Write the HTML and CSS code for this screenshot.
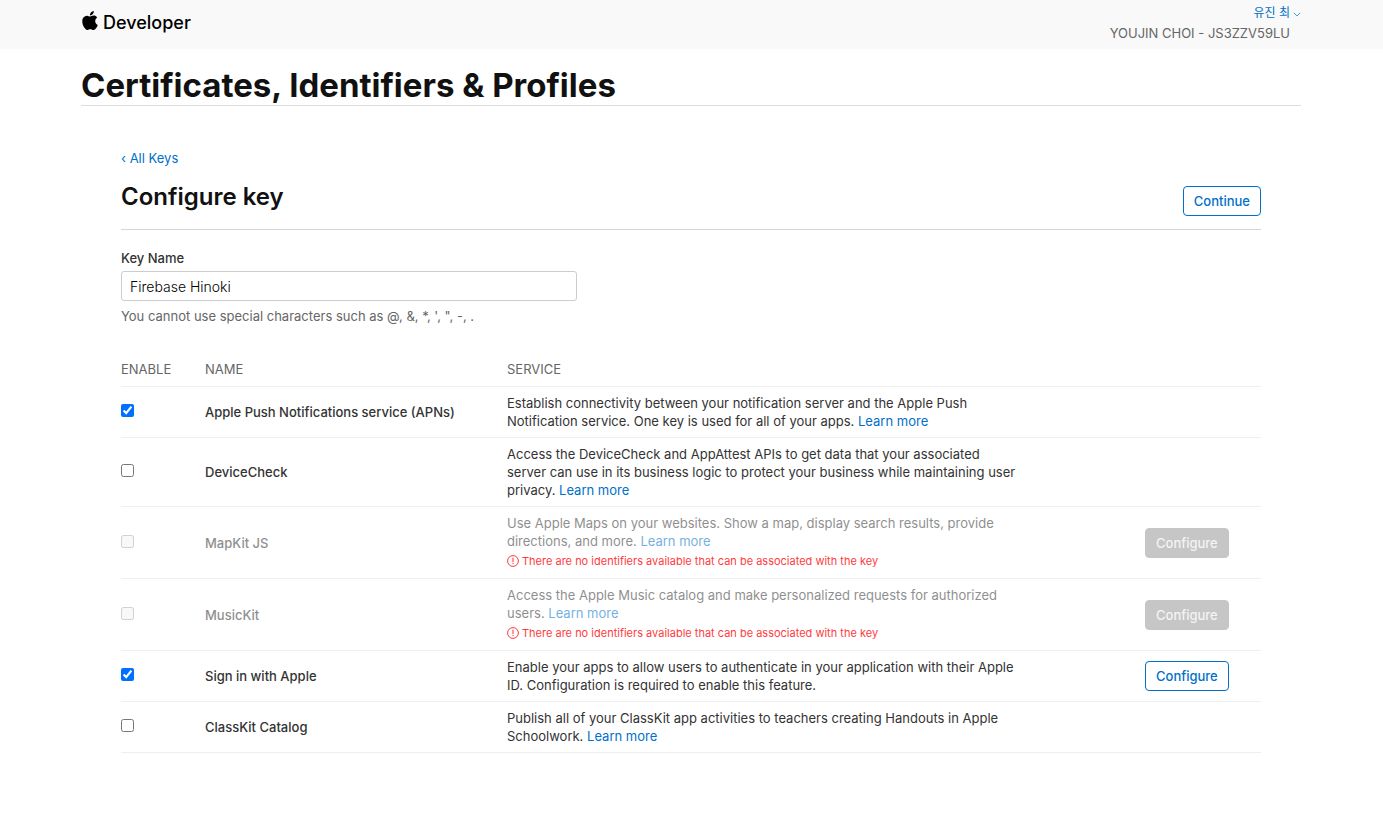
FILE: index.html
```html
<!DOCTYPE html>
<html lang="en">
<head>
<meta charset="utf-8">
<title>Certificates, Identifiers &amp; Profiles</title>
<link rel="stylesheet" href="styles.css">
</head>
<body>
<svg class="sprite" aria-hidden="true">
  <symbol id="alert" viewBox="0 0 12 12">
    <circle cx="6" cy="6" r="5.4" fill="none" stroke="currentColor" stroke-width="1"/>
    <path d="M6 3v3.6" stroke="currentColor" stroke-width="1.1" stroke-linecap="round"/>
    <circle cx="6" cy="8.6" r="0.7" fill="currentColor"/>
  </symbol>
</svg>
<header class="topbar">
  <a class="brand" href="#">
    <svg class="brand-logo" viewBox="2 0 20 24" aria-hidden="true"><path d="M12.152 6.896c-.948 0-2.415-1.078-3.96-1.04-2.04.027-3.91 1.183-4.961 3.014-2.117 3.675-.546 9.103 1.519 12.09 1.013 1.454 2.208 3.09 3.792 3.039 1.52-.065 2.09-.987 3.935-.987 1.831 0 2.35.987 3.96.948 1.637-.026 2.676-1.48 3.676-2.948 1.156-1.688 1.636-3.325 1.662-3.415-.039-.013-3.182-1.221-3.22-4.857-.026-3.04 2.48-4.494 2.597-4.559-1.429-2.09-3.623-2.324-4.39-2.376-2-.156-3.675 1.09-4.61 1.09zM15.53 3.83c.843-1.012 1.4-2.427 1.245-3.83-1.207.052-2.662.805-3.532 1.818-.78.896-1.454 2.338-1.273 3.714 1.338.104 2.715-.688 3.559-1.701"/></svg>
    <span>Developer</span>
  </a>
  <div class="account">
    <a class="account-user" href="#"><span lang="ko">유진 최</span><svg class="chevron" viewBox="0 0 8 5" aria-hidden="true"><path d="M0.8 0.8L4 4L7.200 0.8"/></svg></a>
    <span class="account-team">YOUJIN CHOI - JS3ZZV59LU</span>
  </div>
</header>
<main class="page">
  <h1 class="page-title">Certificates, Identifiers &amp; Profiles</h1>
  <section class="content">
    <a class="back" href="#">‹ All Keys</a>
    <div class="heading">
      <h2 class="heading-title">Configure key</h2>
      <button class="button" type="button">Continue</button>
    </div>
    <div class="field">
      <label class="field-label" for="key-name">Key Name</label>
      <input class="field-input" id="key-name" type="text" value="Firebase Hinoki">
      <p class="field-hint">You cannot use special characters such as @, &amp;, *, ', ", -, .</p>
    </div>
    <table class="services">
      <thead>
        <tr><th class="col-enable">ENABLE</th><th class="col-name">NAME</th><th>SERVICE</th><th class="col-action"></th></tr>
      </thead>
      <tbody>
        <tr>
          <td><input class="check" type="checkbox" id="apns" checked></td>
          <td><label class="name" for="apns">Apple Push Notifications service (APNs)</label></td>
          <td><p class="text">Establish connectivity between your notification server and the Apple Push Notification service. One key is used for all of your apps. <a href="#">Learn more</a></p></td>
          <td></td>
        </tr>
        <tr>
          <td><input class="check" type="checkbox" id="devicecheck"></td>
          <td><label class="name" for="devicecheck">DeviceCheck</label></td>
          <td><p class="text">Access the DeviceCheck and AppAttest APIs to get data that your associated server can use in its business logic to protect your business while maintaining user privacy. <a href="#">Learn more</a></p></td>
          <td></td>
        </tr>
        <tr class="is-disabled">
          <td><input class="check" type="checkbox" id="mapkit" disabled></td>
          <td><label class="name" for="mapkit">MapKit JS</label></td>
          <td><p class="text">Use Apple Maps on your websites. Show a map, display search results, provide directions, and more. <a href="#">Learn more</a></p>
            <p class="error"><svg class="error-icon" aria-hidden="true"><use href="#alert"/></svg>There are no identifiers available that can be associated with the key</p></td>
          <td><button class="button" type="button" disabled>Configure</button></td>
        </tr>
        <tr class="is-disabled">
          <td><input class="check" type="checkbox" id="musickit" disabled></td>
          <td><label class="name" for="musickit">MusicKit</label></td>
          <td><p class="text">Access the Apple Music catalog and make personalized requests for authorized users. <a href="#">Learn more</a></p>
            <p class="error"><svg class="error-icon" aria-hidden="true"><use href="#alert"/></svg>There are no identifiers available that can be associated with the key</p></td>
          <td><button class="button" type="button" disabled>Configure</button></td>
        </tr>
        <tr>
          <td><input class="check" type="checkbox" id="signin" checked></td>
          <td><label class="name" for="signin">Sign in with Apple</label></td>
          <td><p class="text">Enable your apps to allow users to authenticate in your application with their Apple ID. Configuration is required to enable this feature.</p></td>
          <td><button class="button" type="button">Configure</button></td>
        </tr>
        <tr>
          <td><input class="check" type="checkbox" id="classkit"></td>
          <td><label class="name" for="classkit">ClassKit Catalog</label></td>
          <td><p class="text">Publish all of your ClassKit app activities to teachers creating Handouts in Apple Schoolwork. <a href="#">Learn more</a></p></td>
          <td></td>
        </tr>
      </tbody>
    </table>
  </section>
</main>
</body>
</html>
```
FILE: styles.css
```css
* { box-sizing: border-box; }
body {
  margin: 0;
  background: #fff;
  color: #333;
  font: 13px/18px Inter, "Noto Sans CJK KR", sans-serif;
}
h1, h2, p { margin: 0; }
a { color: #0070c9; text-decoration: none; }
.sprite { display: none; }

.topbar {
  display: flex;
  justify-content: space-between;
  align-items: flex-start;
  padding: 3px 82px 6px;
  background: #f9f9f9;
}
.brand {
  display: flex;
  align-items: center;
  gap: 5px;
  padding-top: 8px;
  color: #000;
  font-size: 18px;
  font-weight: 500;
  line-height: 24px;
}
.brand-logo { width: 16px; height: 19px; margin-bottom: 5px; }
.account { display: flex; flex-direction: column; align-items: flex-end; line-height: 20px; }
.account-user { display: flex; align-items: center; gap: 3px; font-size: 12px; }
.chevron { width: 8px; height: 5px; margin-top: 2px; fill: none; stroke: #4a9edb; stroke-width: 1; }
.account-team { padding-right: 11px; color: #666; }

.page { padding: 16px 82px 80px 81px; }
.page-title {
  border-bottom: 1px solid #ddd;
  color: #111;
  font-size: 33px;
  font-weight: 700;
  line-height: 40px;
}
.content { padding: 43px 40px 0; }
.back { display: inline-block; }
.heading {
  display: flex;
  justify-content: space-between;
  align-items: flex-start;
  margin-top: 11px;
  padding-bottom: 13px;
  border-bottom: 1px solid #d6d6d6;
}
.heading-title { color: #111; font-size: 24px; font-weight: 600; line-height: 38px; }
.heading .button { margin-top: 8px; }
.button {
  height: 30px;
  padding: 0 10px;
  border: 1px solid #0070c9;
  border-radius: 4px;
  background: #fff;
  color: #0070c9;
  font: 500 13px/18px Inter, sans-serif;
}
.button:disabled { border-color: #c6c6c6; background: #c6c6c6; color: #f4f4f4; }

.field { display: flex; flex-direction: column; align-items: flex-start; padding-top: 19px; }
.field-label { font-weight: 500; }
.field-input {
  width: 40%;
  height: 30px;
  margin: 4px 0 6px;
  padding: 0 8px;
  border: 1px solid #ccc;
  border-radius: 3px;
  background: #fff;
  color: #000;
  font: 300 14px/20px Inter, sans-serif;
}
.field-hint { color: #666; }

.services { width: 100%; margin-top: 28px; border-collapse: collapse; table-layout: fixed; }
.services th {
  padding: 7px 0 8px;
  border-bottom: 1px solid #eee;
  color: #666;
  font-weight: 400;
  text-align: left;
}
.services td { padding: 7px 0; border-bottom: 1px solid #eee; vertical-align: middle; }
.col-enable { width: 84px; }
.col-name { width: 302px; }
.col-action { width: 116px; }
.check { display: block; width: 13px; height: 13px; margin: 0 0 3px; accent-color: #0070ff; }
.name { font-weight: 500; }
.text { max-width: 512px; }
.error {
  display: flex;
  align-items: center;
  gap: 3px;
  margin: 2px 0 1px;
  color: #ff3b40;
  font-size: 11px;
}
.error-icon { width: 12px; height: 12px; }
.is-disabled .name, .is-disabled .text { opacity: 0.55; }
```
